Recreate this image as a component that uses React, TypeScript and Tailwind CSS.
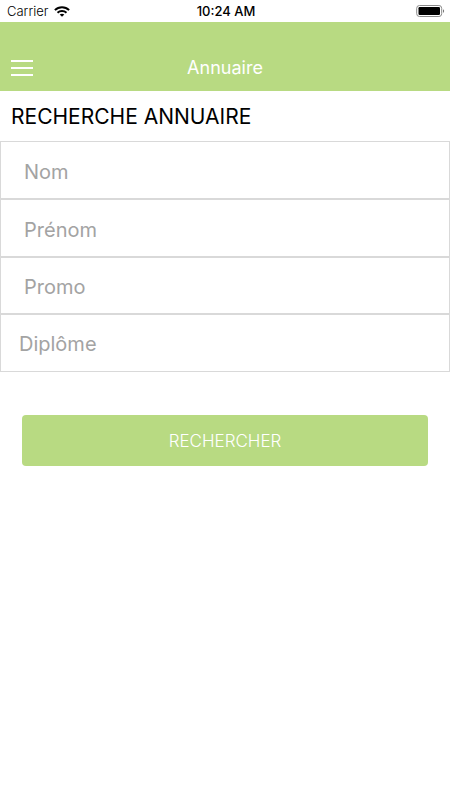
import React from "react";

const fields = [
  { id: "nom", label: "Nom" },
  { id: "prenom", label: "Prénom" },
  { id: "promo", label: "Promo" },
];

function WifiIcon() {
  return (
    <svg className="h-[11px] w-[16px]" viewBox="0 0 16 11" aria-hidden="true">
      <path d="M0.9 4.1C4.8 0.3 11.2 0.3 15.1 4.1" fill="none" stroke="#000" strokeWidth="2" />
      <path d="M3.5 6.7C6 4.4 10 4.4 12.5 6.7" fill="none" stroke="#000" strokeWidth="1.9" />
      <path d="M8 10.8L5.7 8.6C7 7.5 9 7.5 10.3 8.6Z" fill="#000" />
    </svg>
  );
}

function BatteryIcon() {
  return (
    <svg className="h-[12px] w-[29px]" viewBox="0 0 29 12" aria-hidden="true">
      <rect x="0.7" y="0.5" width="25" height="11" rx="2.8" fill="none" stroke="#8a8a8a" />
      <rect x="2.5" y="2" width="21.5" height="8" rx="1.2" fill="#000" />
      <path d="M27 4.2C28.5 4.6 28.5 7.4 27 7.8Z" fill="#777" />
    </svg>
  );
}

export default function App() {
  return (
    <div className="min-h-screen bg-white font-['Inter','Liberation_Sans',sans-serif]">
      <div className="grid h-[22px] grid-cols-3 items-center pr-[5px] pl-[7px] text-[13px] leading-4 text-black">
        <div className="flex items-center gap-[6px]">
          <span className="font-light">Carrier</span>
          <WifiIcon />
        </div>
        <span className="text-center font-medium">10:24 AM</span>
        <div className="flex justify-end">
          <BatteryIcon />
        </div>
      </div>

      <header className="grid h-[69px] grid-cols-[1fr_auto_1fr] items-end bg-[#b8da82] px-[11px] pb-[11px] text-white">
        <button type="button" aria-label="Menu" className="flex h-6 w-[22px] flex-col justify-center gap-[5px]">
          <span className="h-[2px] w-full bg-white" />
          <span className="h-[2px] w-full bg-white" />
          <span className="h-[2px] w-full bg-white" />
        </button>
        <h1 className="text-[18px] leading-6">Annuaire</h1>
      </header>

      <main>
        <h2 className="px-[11px] pt-[10px] pb-2 text-[21px] leading-8 text-black">RECHERCHE ANNUAIRE</h2>
        <form onSubmit={(e) => e.preventDefault()}>
          <div className="grid h-[231px] grid-rows-4">
            {fields.map((f) => (
              <input
                key={f.id}
                id={f.id}
                type="text"
                aria-label={f.label}
                placeholder={f.label}
                className="w-full border border-[#d9d9d9] bg-white px-[23px] pt-1 text-[20px] text-black outline-none placeholder:text-[#a3a3a3]"
              />
            ))}
            <select
              aria-label="Diplôme"
              className="w-full appearance-none border border-[#d9d9d9] bg-white px-[18px] pt-[2px] text-[20px] text-[#a3a3a3] outline-none"
            >
              <option>Diplôme</option>
            </select>
          </div>
          <div className="px-[22px] pt-[43px]">
            <button type="submit" className="h-[51px] w-full rounded-[4px] bg-[#b8da82] pt-[2px] text-[17px] font-light text-white">
              RECHERCHER
            </button>
          </div>
        </form>
      </main>
    </div>
  );
}
